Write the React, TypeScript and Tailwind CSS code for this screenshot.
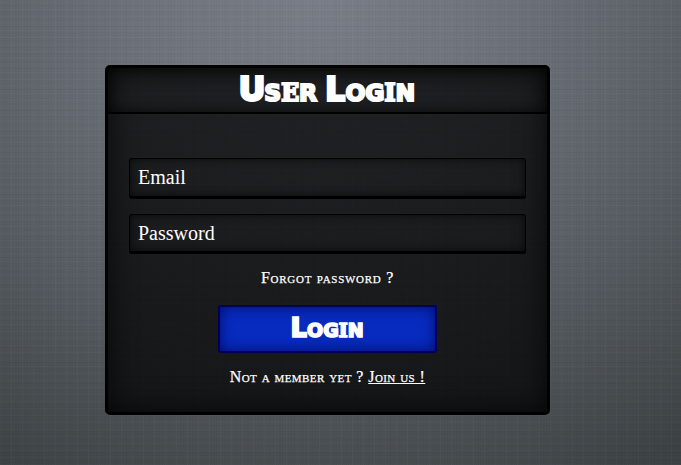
import React from "react";

const serif = "font-['Liberation_Serif',serif]";

// Woven linen texture, drawn as fine threads of uneven spacing.
const weave =
  "bg-[repeating-linear-gradient(90deg,rgba(255,255,255,0.025)_0px_1px,transparent_1px_5px,rgba(0,0,0,0.02)_5px_6px,transparent_6px_11px),repeating-linear-gradient(90deg,rgba(0,0,0,0.02)_0px_1px,transparent_1px_3px),repeating-linear-gradient(0deg,rgba(255,255,255,0.02)_0px_1px,transparent_1px_4px,rgba(0,0,0,0.02)_4px_5px,transparent_5px_7px),repeating-linear-gradient(0deg,rgba(0,0,0,0.02)_0px_1px,transparent_1px_3px)]";

// Heavy display lettering: the slab face carries E and I, the block face the other letters.
function Word({ first, rest, className = "" }: { first: string; rest: string; className?: string }) {
  return (
    <span className={`inline-flex items-baseline [-webkit-text-stroke:0.06em_white] ${className}`}>
      <span className="font-['Inter',sans-serif] font-black">{first}</span>
      <span className="text-[0.69em] font-bold [-webkit-text-stroke:0.09em_white]">
        {rest.split("").map((c, i) => (
          <span key={i} className={c === "E" || c === "I" ? "font-['DejaVu_Serif',serif]" : "font-['DejaVu_Sans',sans-serif]"}>
            {c}
          </span>
        ))}
      </span>
    </span>
  );
}

function Field({ label, type, className }: { label: string; type: string; className: string }) {
  return (
    <input
      type={type}
      placeholder={label}
      aria-label={label}
      className={`block w-[397px] rounded-[3px] border border-b-[3px] border-black bg-transparent pl-2 text-[20px] text-white outline-none placeholder:text-white placeholder:opacity-100 shadow-[inset_0_0_10px_rgba(0,0,0,0.65)] ${serif} ${className}`}
    />
  );
}

export default function App() {
  return (
    <main className="h-[465px] w-[681px] overflow-hidden bg-[radial-gradient(ellipse_620px_540px_at_320px_0px,#7a7e89_0%,#6e737b_30%,#575d62_65%,#3d4245_100%)]">
      <div className={`h-full w-full pl-[105px] pt-[65px] ${weave}`}>
        <form
          onSubmit={(e) => e.preventDefault()}
          className={`flex h-[350px] w-[445px] flex-col items-center rounded-[5px] border-[3px] border-black bg-[linear-gradient(rgba(0,0,0,0.73),rgba(0,0,0,0.73))] text-white shadow-[inset_0_0_30px_rgba(0,0,0,0.75)] ${serif}`}
        >
          <h1 className="flex h-[46px] w-full shrink-0 items-center justify-center gap-[9px] border-b-2 border-black pb-[3px] text-[34px] leading-none shadow-[inset_0_0_14px_rgba(0,0,0,0.75)]">
            <Word first="U" rest="SER" />
            <Word first="L" rest="OGIN" />
          </h1>
          <Field label="Email" type="email" className="mt-[44px] h-[41px]" />
          <Field label="Password" type="password" className="mt-[15px] h-[40px]" />
          <a
            href="#forgot"
            className="mt-[14px] h-5 whitespace-nowrap text-[16px] leading-5 tracking-[0.72px] [font-variant:small-caps] [-webkit-text-stroke:0.25px_white]"
          >
            Forgot password ?
          </a>
          <button className="mt-[17px] flex h-[48px] w-[219px] shrink-0 items-center justify-center rounded-[3px] border-2 border-[#00005a] bg-[#072bbf] pb-[3px] text-[27.5px] leading-none shadow-[inset_0_0_14px_rgba(0,0,80,0.75)]">
            <Word first="L" rest="OGIN" />
          </button>
          <p className="mt-[14px] h-5 whitespace-nowrap text-[16px] leading-5 tracking-[0.43px] [font-variant:small-caps] [-webkit-text-stroke:0.25px_white]">
            Not a member yet ?{" "}
            <a href="#join" className="underline">
              Join us !
            </a>
          </p>
        </form>
      </div>
    </main>
  );
}
